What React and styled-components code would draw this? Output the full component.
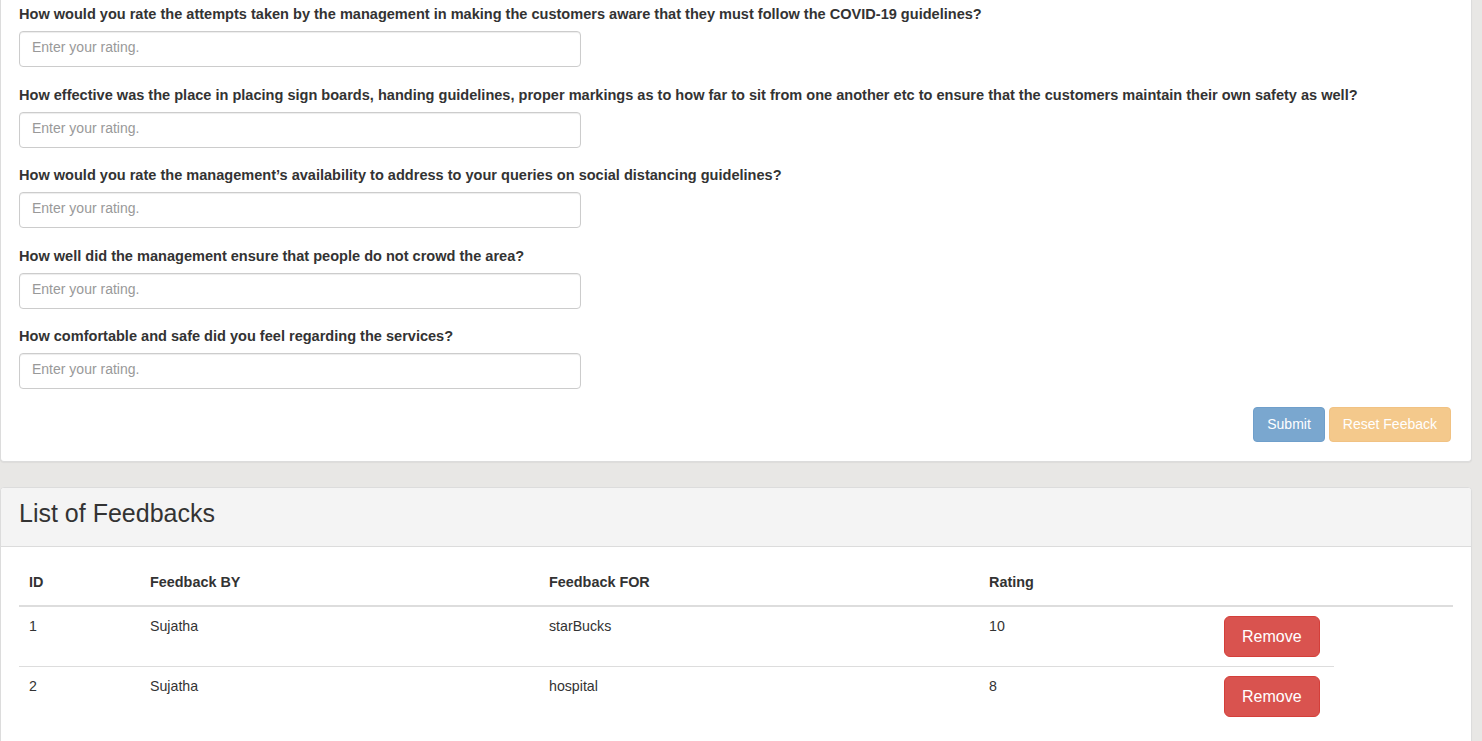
import styled, { createGlobalStyle } from 'styled-components';

const GlobalStyle = createGlobalStyle`
    html, body {
        margin: 0;
        padding: 0;
        background: #e8e7e5;
        font-family: "Liberation Sans", Arial, Helvetica, sans-serif;
        font-size: 14px;
        color: #333;
    }
    * {
        box-sizing: border-box;
    }
`

const Page = styled.div`
    padding: 0 10px 0 0;
`

const Panel = styled.div`
    background: #fff;
    border: 1px solid #dcdcdc;
    border-radius: 4px;
    box-shadow: 0 1px 1px rgba(0, 0, 0, .05);
    margin-bottom: 25px;

    ${({ cut }) => cut && `
        border-top: none;
        border-top-left-radius: 0;
        border-top-right-radius: 0;
    `}
`

const PanelBody = styled.div`
    padding: ${({ top }) => top}px 18px ${({ bottom }) => bottom}px;
`

const PanelHeading = styled.div`
    background: #f4f4f4;
    border-bottom: 1px solid #dcdcdc;
    border-top-left-radius: 3px;
    border-top-right-radius: 3px;
    padding: 12px 18px 19px;
`

const PanelTitle = styled.h3`
    margin: 0;
    font-size: 25px;
    font-weight: 400;
    line-height: 1.1;
    color: #333;
`

const FormGroup = styled.div`
    margin-bottom: 16.5px;
`

const Label = styled.label`
    display: block;
    font-size: 14.55px;
    font-weight: 700;
    line-height: 20px;
    padding-top: 1px;
    margin-bottom: 7px;
`

const Input = styled.input`
    display: block;
    width: 562px;
    height: 36px;
    padding: 4px 12px 8px;
    font-family: inherit;
    font-size: 14px;
    line-height: 20px;
    color: #555;
    background: #fff;
    border: 1px solid #ccc;
    border-radius: 4px;
    box-shadow: inset 0 1px 1px rgba(0, 0, 0, .075);

    &::placeholder {
        color: #999;
    }
`

const Actions = styled.div`
    display: flex;
    justify-content: flex-end;
    gap: 4px;
    padding-top: 1px;
    padding-right: 2px;
`

const Button = styled.button`
    height: ${({ large }) => (large ? 41 : 35)}px;
    padding: 0 ${({ large }) => (large ? 17 : 13)}px;
    font-family: inherit;
    font-size: ${({ large }) => (large ? 16 : 14)}px;
    color: #fff;
    border: 1px solid ${({ border }) => border};
    background: ${({ bg }) => bg};
    border-radius: ${({ large }) => (large ? 6 : 4)}px;
    cursor: pointer;
`

const Table = styled.table`
    width: 1434px;
    table-layout: fixed;
    border-collapse: collapse;
    border-spacing: 0;
`

const Th = styled.th`
    text-align: left;
    font-size: 14.4px;
    font-weight: 700;
    line-height: 20px;
    padding: 7px 10px 13px;
    border-bottom: 2px solid #ddd;
`

const Td = styled.td`
    font-size: 14.2px;
    line-height: 20px;
    padding: 9px 10px;
    vertical-align: top;
    border-top: 1px solid #ddd;

    tr:first-child > & {
        border-top: none;
    }
`

const questions = [
    'How would you rate the attempts taken by the management in making the customers aware that they must follow the COVID-19 guidelines?',
    'How effective was the place in placing sign boards, handing guidelines, proper markings as to how far to sit from one another etc to ensure that the customers maintain their own safety as well?',
    'How would you rate the management\u2019s availability to address to your queries on social distancing guidelines?',
    'How well did the management ensure that people do not crowd the area?',
    'How comfortable and safe did you feel regarding the services?',
]

const feedbacks = [
    { id: 1, by: 'Sujatha', target: 'starBucks', rating: 10 },
    { id: 2, by: 'Sujatha', target: 'hospital', rating: 8 },
]

const colWidths = [121, 399, 440, 235, 120, 119]

const App = () => {
    return (
        <>
            <GlobalStyle />
            <Page>
                <Panel cut>
                    <PanelBody top={3} bottom={19}>
                        {questions.map((q) => (
                            <FormGroup key={q}>
                                <Label>{q}</Label>
                                <Input placeholder="Enter your rating." />
                            </FormGroup>
                        ))}
                        <Actions>
                            <Button bg="#7aa7cf" border="#6f9fcb">Submit</Button>
                            <Button bg="#f4c98c" border="#f1c283">Reset Feeback</Button>
                        </Actions>
                    </PanelBody>
                </Panel>

                <Panel>
                    <PanelHeading>
                        <PanelTitle>List of Feedbacks</PanelTitle>
                    </PanelHeading>
                    <PanelBody top={18} bottom={18}>
                        <Table>
                            <colgroup>
                                {colWidths.map((w, i) => (
                                    <col key={i} style={{ width: w }} />
                                ))}
                            </colgroup>
                            <thead>
                                <tr>
                                    <Th>ID</Th>
                                    <Th>Feedback BY</Th>
                                    <Th>Feedback FOR</Th>
                                    <Th>Rating</Th>
                                    <Th />
                                    <Th />
                                </tr>
                            </thead>
                            <tbody>
                                {feedbacks.map((f) => (
                                    <tr key={f.id}>
                                        <Td>{f.id}</Td>
                                        <Td>{f.by}</Td>
                                        <Td>{f.target}</Td>
                                        <Td>{f.rating}</Td>
                                        <Td>
                                            <Button large bg="#d9534f" border="#d43f3a">Remove</Button>
                                        </Td>
                                    </tr>
                                ))}
                            </tbody>
                        </Table>
                    </PanelBody>
                </Panel>
            </Page>
        </>
    );
}

export default App;
